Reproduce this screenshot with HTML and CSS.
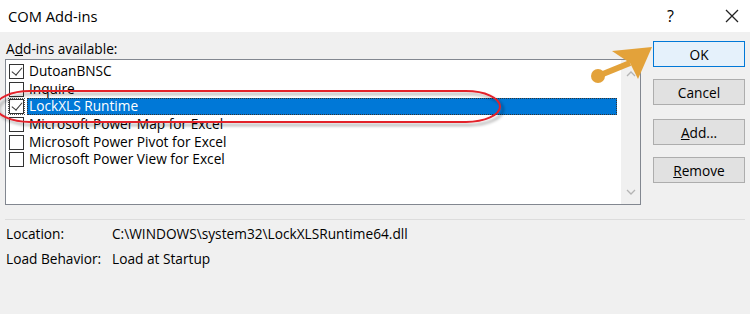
FILE: index.html
```html
<!DOCTYPE html>
<html lang="en">
<head>
    <meta charset="UTF-8">
    <title>COM Add-ins</title>
<link rel="stylesheet" href="styles.css">
</head>
<body>

    <!-- title bar -->
    <div class="titlebar">
        <span class="title">COM Add-ins</span>
        <span class="help">?</span>
        <span class="close">
            <svg width="14" height="14" viewBox="0 0 14 14"><path d="M1 1L13 13M13 1L1 13" stroke="#222" stroke-width="1.3" fill="none"/></svg>
        </span>
    </div>

    <div class="dialog">
        <div class="main">
            <div class="left">
                <div class="label">A<u>d</u>d-ins available:</div>
                <div class="listbox">
                    <ul class="items">
                        <li class="item"><span class="check on"></span><span class="name">DutoanBNSC</span></li>
                        <li class="item"><span class="check"></span><span class="name">Inquire</span></li>
                        <li class="item selected"><span class="check on focus"></span><span class="name">LockXLS Runtime</span></li>
                        <li class="item"><span class="check"></span><span class="name">Microsoft Power Map for Excel</span></li>
                        <li class="item"><span class="check"></span><span class="name">Microsoft Power Pivot for Excel</span></li>
                        <li class="item"><span class="check"></span><span class="name">Microsoft Power View for Excel</span></li>
                    </ul>
                    <div class="scrollbar">
                        <svg width="10" height="6" viewBox="0 0 10 6"><path d="M1 5L5 1L9 5" stroke="#b4b4b4" stroke-width="1.3" fill="none"/></svg>
                        <svg width="10" height="6" viewBox="0 0 10 6"><path d="M1 1L5 5L9 1" stroke="#b4b4b4" stroke-width="1.3" fill="none"/></svg>
                    </div>
                </div>
            </div>

            <div class="buttons">
                <button type="button" class="btn default">OK</button>
                <button type="button" class="btn">Cancel</button>
                <button type="button" class="btn gap"><u>A</u>dd...</button>
                <button type="button" class="btn"><u>R</u>emove</button>
            </div>
        </div>

        <div class="info">
            <div class="row"><span class="key">Location:</span><span>C:\WINDOWS\system32\LockXLSRuntime64.dll</span></div>
            <div class="row"><span class="key">Load Behavior:</span><span>Load at Startup</span></div>
        </div>
    </div>

    <!-- annotations drawn on top of the screenshot -->
    <svg class="marks" width="750" height="314" viewBox="0 0 750 314">
        <defs>
            <filter id="shade" x="-10%" y="-50%" width="120%" height="200%">
                <feDropShadow dx="3" dy="3" stdDeviation="1.5" flood-color="#000" flood-opacity="0.35"/>
            </filter>
        </defs>
        <rect x="-4" y="91" width="504" height="31" rx="34" ry="15.5" fill="none" stroke="#e3212b" stroke-width="2" filter="url(#shade)"/>
        <circle cx="598" cy="76" r="7" fill="#e3a23a"/>
        <path d="M598 76L630 63" stroke="#e3a23a" stroke-width="6" fill="none"/>
        <path d="M612 51L652 47L638 79L630 63Z" fill="#e3a23a"/>
    </svg>

</body>
</html>
```

FILE: styles.css
```css
*{
    margin: 0;
    padding: 0;
    box-sizing: border-box;
}
body{
    font-family: "Open Sans", "Noto Sans", sans-serif;
    font-size: 13.7px;
    color: #000;
    background: #f0f0f0;
    width: 750px;
    height: 314px;
    overflow: hidden;
    position: relative;
}
.titlebar{
    height: 32px;
    background: #fff;
    display: flex;
    align-items: center;
    padding-left: 8px;
}
.title{
    font-size: 14.7px;
    flex: 1;
}
.help{
    font-size: 16px;
    width: 20px;
    margin-right: 38px;
}
.close{
    width: 25px;
    display: flex;
}
.dialog{
    padding: 0 5px 0 5px;
}
.main{
    display: flex;
}
.left{
    width: 636px;
}
.label{
    height: 27px;
    line-height: 33px;
    padding-left: 1px;
}
.listbox{
    height: 146px;
    border: 1px solid #828790;
    background: #fff;
    display: flex;
}
.items{
    list-style: none;
    flex: 1;
    padding: 3px 4px 0 3px;
}
.item{
    height: 17.6px;
    display: flex;
    align-items: center;
}
.check{
    width: 15px;
    height: 15px;
    border: 1px solid #333;
    background: #fff;
    margin-right: 3px;
    position: relative;
}
.check.on::after{
    content: "";
    position: absolute;
    left: 4px;
    top: 0px;
    width: 5px;
    height: 9px;
    border-right: 1.5px solid #333;
    border-bottom: 1.5px solid #333;
    transform: rotate(40deg);
}
.check.focus{
    outline: 1px dotted #555;
    outline-offset: 0;
}
.name{
    flex: 1;
    height: 17px;
    line-height: 16px;
    padding-left: 2px;
}
.selected .name{
    background: #0078d7;
    color: #fff;
    outline: 1px dotted #333;
    outline-offset: -1px;
}
.scrollbar{
    width: 19px;
    background: #f0f0f0;
    display: flex;
    flex-direction: column;
    justify-content: space-between;
    align-items: center;
    padding: 11px 0 9px;
}
.buttons{
    margin-left: 12px;
    padding-top: 9px;
    display: flex;
    flex-direction: column;
}
.btn{
    width: 92px;
    height: 26px;
    border: 1px solid #adadad;
    background: #e1e1e1;
    font-family: "Open Sans", "Noto Sans", sans-serif;
    font-size: 13.7px;
    color: #000;
    margin-bottom: 12px;
}
.btn.default{
    border-color: #0078d7;
    background: #e5f1fb;
}
.btn.gap{
    margin-top: 2px;
}
.info{
    margin-top: 14px;
    border-top: 1px solid #dcdcdc;
    padding-top: 1px;
}
.row{
    height: 25px;
    line-height: 25px;
    display: flex;
    padding-left: 1px;
}
.key{
    width: 106px;
}
.marks{
    position: absolute;
    left: 0;
    top: 0;
    pointer-events: none;
}
```
